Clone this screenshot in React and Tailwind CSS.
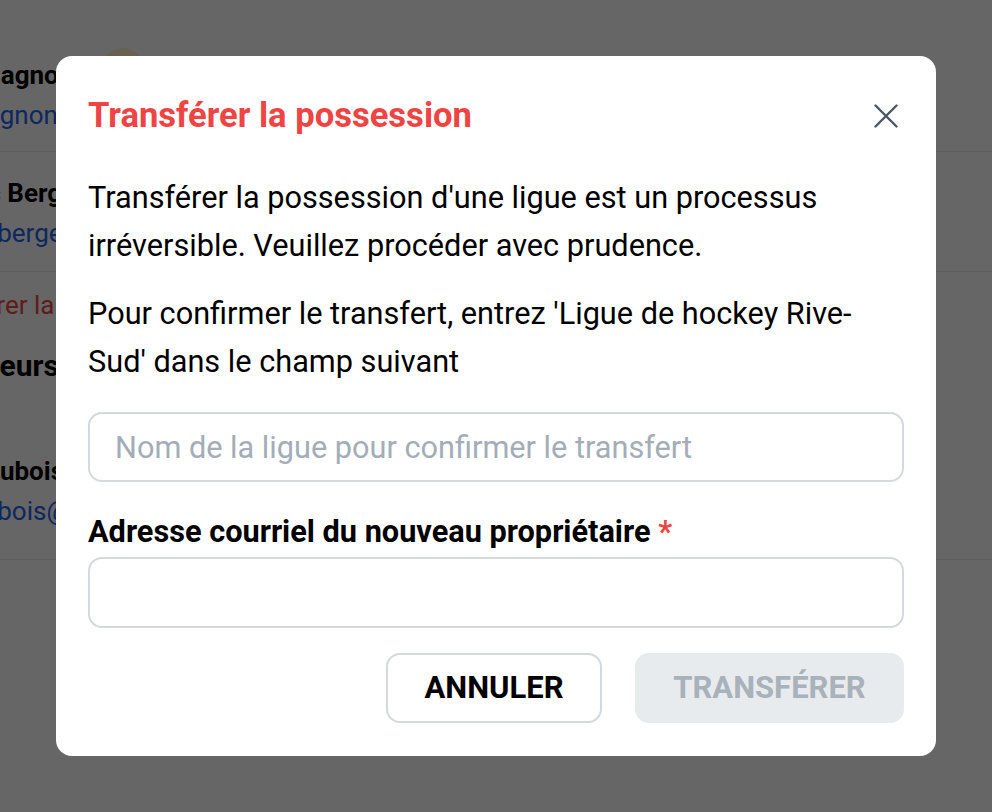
import { useState } from 'react'

const font = { fontFamily: 'Roboto, "Noto Sans", Arial, sans-serif' }

function MemberRow({ name, email, nameOffset, emailOffset, avatar, className = '' }) {
  return (
    <div className={`border-b border-[#e5e7eb] ${className}`}>
      <div className="flex items-center gap-7" style={{ marginLeft: nameOffset }}>
        <p className="text-[26px] font-bold leading-[40px] text-black whitespace-nowrap">{name}</p>
        {avatar && <span className="mt-[-10px] h-11 w-11 rounded-full bg-[#fef3c7]" />}
      </div>
      <p className="text-[26px] leading-[40px] text-[#2563eb] whitespace-nowrap" style={{ marginLeft: emailOffset }}>
        {email}
      </p>
    </div>
  )
}

function Background() {
  return (
    <div className="h-[812px] w-full overflow-hidden bg-white" style={font}>
      <div className="flex flex-col pt-[8px]">
        <MemberRow name="Gagnon" email="gagnon@liguerivesud.ca" nameOffset={-17} emailOffset={-29} avatar className="h-[144px] pt-[47px]" />
        <MemberRow name="Luc Bergeron" email="l.bergeron@liguerivesud.ca" nameOffset={-41} emailOffset={-16} className="h-[120px] pt-[21px]" />
        <p className="ml-[-91px] mt-[13px] text-[26px] leading-[40px] text-[#ef4444] whitespace-nowrap">
          Transférer la possession
        </p>
        <h2 className="ml-[-51px] mt-[21px] text-[30px] font-bold leading-[40px] text-black">Joueurs</h2>
        <div className="mt-[65px]">
          <MemberRow name="Dubois" email="s.dubois@liguerivesud.ca" nameOffset={-17} emailOffset={-52} className="h-[109px]" />
        </div>
      </div>
    </div>
  )
}

export default function App() {
  const [leagueName, setLeagueName] = useState('')
  const [email, setEmail] = useState('')
  const canTransfer = leagueName === 'Ligue de hockey Rive-Sud' && email.length > 0

  return (
    <div className="relative" style={font}>
      <Background />

      <div className="fixed inset-0 flex items-center justify-center bg-black/60">
        <div className="w-[880px] rounded-2xl bg-white px-8 pt-[34px] pb-[33px]">
          <div className="flex h-[52px] items-center justify-between">
            <h1 className="text-[34.6px] font-bold text-[#ef4444]">Transférer la possession</h1>
            <button className="flex h-9 w-9 items-center justify-center text-[#4b5563]">
              <svg width="24" height="24" viewBox="0 0 24 24" fill="none" stroke="currentColor" strokeWidth="2.4" strokeLinecap="round">
                <path d="M1.5 1.5 22.5 22.5M22.5 1.5 1.5 22.5" />
              </svg>
            </button>
          </div>

          <p className="mt-[32px] text-[30.7px] leading-[48px] text-black">
            Transférer la possession d'une ligue est un processus irréversible. Veuillez procéder avec prudence.
          </p>
          <p className="mt-[20px] text-[30.7px] leading-[48px] text-black">
            Pour confirmer le transfert, entrez 'Ligue de hockey Rive-Sud' dans le champ suivant
          </p>

          <input
            value={leagueName}
            onChange={e => setLeagueName(e.target.value)}
            placeholder="Nom de la ligue pour confirmer le transfert"
            className="mt-[26px] h-[70px] w-full rounded-[14px] border-2 border-[#d5d9de] px-[25px] text-[30.7px] text-black outline-none placeholder:text-[#a3adb8]"
          />

          <label className="mt-[34px] block text-[30.7px] font-bold leading-[32px] text-black">
            Adresse courriel du nouveau propriétaire <span className="text-[#ef4444]">*</span>
          </label>
          <input
            type="email"
            value={email}
            onChange={e => setEmail(e.target.value)}
            className="mt-[9px] h-[71px] w-full rounded-[14px] border-2 border-[#d5d9de] px-[25px] text-[30.7px] text-black outline-none"
          />

          <div className="mt-[25px] flex justify-end gap-[33px]">
            <button className="h-[70px] w-[216px] rounded-[14px] border-2 border-[#d5d9de] bg-white text-[31px] font-bold uppercase text-black">
              Annuler
            </button>
            <button
              disabled={!canTransfer}
              className="h-[70px] w-[269px] rounded-[14px] bg-[#e8ebee] text-[31px] font-bold uppercase text-[#a9b1ba]"
            >
              Transférer
            </button>
          </div>
        </div>
      </div>
    </div>
  )
}
